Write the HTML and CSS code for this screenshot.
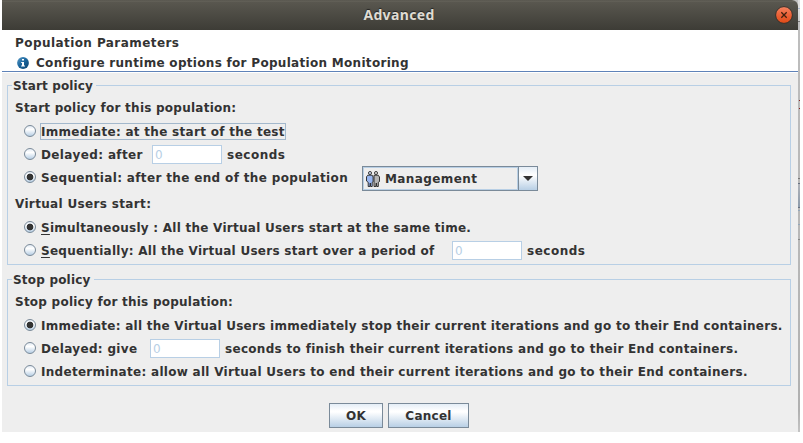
FILE: index.html
```html
<!DOCTYPE html>
<html lang="en">
<head>
<meta charset="utf-8">
<title>Advanced</title>
<link rel="stylesheet" href="styles.css">
</head>
<body>
<div class="desktop">
  <main class="dialog">
    <header class="titlebar">
      <span class="title">Advanced</span>
      <button class="close" aria-label="Close"><svg width="18" height="18" viewBox="0 0 18 18"><defs><linearGradient id="cg" x2="0" y2="1"><stop stop-color="#f58462"/><stop offset=".5" stop-color="#ec6237"/><stop offset="1" stop-color="#df4a16"/></linearGradient></defs><circle cx="9" cy="9" r="8.4" fill="url(#cg)" stroke="#33312c" stroke-width="1"/><path d="M6.3 6.3l5.4 5.4M11.7 6.3l-5.4 5.4" stroke="#40200f" stroke-width="1.3"/></svg></button>
    </header>
    <section class="banner">
      <div class="heading"><span class="t1">Population Parameters</span></div>
      <div class="info">
        <svg width="12" height="12" viewBox="0 0 12 12"><defs><linearGradient id="ig" x2="1" y2="1"><stop stop-color="#5c9cc8"/><stop offset=".45" stop-color="#1d689f"/><stop offset="1" stop-color="#0b426f"/></linearGradient></defs><circle cx="6" cy="6" r="5.9" fill="url(#ig)"/><path d="M5 2h2v1.6H5zM4.2 4.9H7V8.4h1v1H4.1v-1H5V5.9h-.8z" fill="#fff"/></svg>
        <span class="t2">Configure runtime options for Population Monitoring</span>
      </div>
    </section>
    <section class="group start">
      <h2 class="legend"><span class="t3">Start policy</span></h2>
      <p class="caption"><span class="t4">Start policy for this population:</span></p>
      <div class="row"><i class="radio"></i><span class="label focus"><span class="t5">Immediate: at the start of the test</span></span></div>
      <div class="row"><i class="radio"></i><span class="label delayed"><span class="t6">Delayed: after</span></span><span class="field">0</span><span class="unit">seconds</span></div>
      <div class="row tall"><i class="radio on"></i><span class="label sequential"><span class="t7">Sequential: after the end of the population</span></span>
        <div class="combo"><div class="value">
          <svg width="14" height="16" viewBox="0 0 14 16"><g stroke="#222" stroke-width=".9"><circle cx="10" cy="2" r="1.5" fill="#eee"/><path d="M8 4.2h4.2l1.3 1.8v4.5l-1.2.8v4.2h-1.6l-.4-3.5-.4 3.5H8z" fill="#b5b5b5"/><circle cx="4" cy="2" r="1.5" fill="#dce8ff"/><path d="M1.8 4.2h4.4l.9 1.8v4.8l-.9.6v4.1H4.6l-.3-3.5-.4 3.5H2.2v-4.2L.5 10V5.8z" fill="#98b6f0"/></g></svg>
          <span class="t8">Management</span></div><div class="arrow"><svg width="10" height="5" viewBox="0 0 10 5"><path d="M0 0h10L5 5z" fill="#333"/></svg></div></div>
      </div>
      <p class="caption users"><span class="t9">Virtual Users start:</span></p>
      <div class="row"><i class="radio on"></i><span class="label"><span class="t10"><u>S</u>imultaneously : All the Virtual Users start at the same time.</span></span></div>
      <div class="row"><i class="radio"></i><span class="label sequentially"><span class="t11"><u>S</u>equentially: All the Virtual Users start over a period of</span></span><span class="field">0</span><span class="unit">seconds</span></div>
    </section>
    <section class="group stop">
      <h2 class="legend"><span class="t12">Stop policy</span></h2>
      <p class="caption"><span class="t13">Stop policy for this population:</span></p>
      <div class="row"><i class="radio on"></i><span class="label"><span class="t14">Immediate: all the Virtual Users immediately stop their current iterations and go to their End containers.</span></span></div>
      <div class="row"><i class="radio"></i><span class="label give"><span class="t15">Delayed: give</span></span><span class="field">0</span><span class="unit long"><span class="t16">seconds to finish their current iterations and go to their End containers.</span></span></div>
      <div class="row"><i class="radio"></i><span class="label"><span class="t17">Indeterminate: allow all Virtual Users to end their current iterations and go to their End containers.</span></span></div>
    </section>
    <footer class="actions"><button class="btn ok">OK</button><button class="btn cancel">Cancel</button></footer>
  </main>
  <div class="behind"><i></i><i></i></div>
</div>
</body>
</html>
```
FILE: styles.css
```css
* { box-sizing: border-box; }
body { margin: 0; background: #fff; color: #333; font: bold 12px/16px "DejaVu Sans", sans-serif; white-space: nowrap; overflow: hidden; }
h2, p { margin: 0; font: inherit; }
.desktop { display: flex; width: 800px; height: 432px; padding-left: 2px; background: linear-gradient(90deg, #fff 2px, #c0c0c0 2px); }
.dialog { width: 796px; height: 432px; background: #eee; border-top-right-radius: 6px; overflow: hidden; }
.titlebar { display: grid; grid-template-columns: 1fr 26px; align-items: center; height: 30px; background: linear-gradient(#4f4d46 0, #68665d 1px, #59574f 2px, #3d3c36 30px); }
.title { padding-left: 24px; text-align: center; color: #dfdbd2; font: bold 14px/18px "Noto Sans", sans-serif; letter-spacing: .35px; text-shadow: 0 -1px 1px #222; }
.close { width: 18px; height: 18px; padding: 0; border: 0; background: none; margin-left: 3px; }
.close svg { display: block; }
.banner { height: 43px; padding: 5px 0 0 13px; background: #fff; border-bottom: 1px solid #fff; box-shadow: inset 0 -1px #5f82b8; }
.heading { height: 16px; }
.info { display: flex; align-items: center; gap: 7px; height: 16px; margin-top: 4px; padding-left: 2px; }
.group { position: relative; width: 784px; margin-left: 5px; padding: 0 0 0 7px; border: 1px solid #b8cfe5; }
.start { height: 180px; margin-top: 12px; }
.stop { height: 107px; margin-top: 14px; }
.legend { position: absolute; left: 4px; top: -8px; padding: 0 3px 0 1px; background: #eee; }
.caption { height: 34px; padding-top: 14px; }
.users { height: 25px; padding-top: 5px; }
.row { display: flex; height: 23px; padding: 0 0 0 9px; }
.tall { height: 25px; }
.radio { flex: none; width: 12px; height: 12px; margin: 5px 4px 0 0; border: 1px solid #7a8a99; border-radius: 50%; background: linear-gradient(#e4ecf5, #fff 35%, #b8cfe5); }
.radio.on { background: radial-gradient(circle, #333 3px, transparent 3.7px), linear-gradient(#e4ecf5, #fff 35%, #b8cfe5); }
.label { height: 17px; margin-top: 3px; padding-left: 1px; line-height: 18px; }
.focus { width: 246px; padding-left: 0; border: 1px solid #a3b8cc; line-height: 16px; }
.delayed { width: 112px; }
.sequential { width: 322px; }
.sequentially { width: 412px; }
.give { width: 110px; }
.field { width: 70px; height: 19px; margin-top: 2px; padding-left: 2px; border: 1px solid #b8cfe5; background: #fff; color: #b8cfe5; font-weight: normal; line-height: 18px; }
.unit { margin: 3px 0 0 5px; line-height: 18px; letter-spacing: .5px; }
.combo { display: flex; width: 176px; height: 25px; border: 1px solid #7a8a99; }
.value { display: flex; align-items: center; gap: 5px; width: 156px; padding-left: 2px; border: 1px solid #b8cfe5; }
.arrow { display: flex; align-items: center; justify-content: center; width: 19px; border-left: 1px solid #7a8a99; background: linear-gradient(#e4edf6, #fff 35%, #b8cfe5); }
u { text-underline-offset: 2px; text-decoration-thickness: 1px; text-decoration-skip-ink: none; }
.actions { display: flex; gap: 5px; margin: 17px 0 0 327px; }
.btn { height: 25px; padding: 0; border: 1px solid #7a8a99; border-radius: 0; background: linear-gradient(#e4edf6, #fff 30%, #fff 35%, #b8cfe5); color: #333; font: inherit; letter-spacing: .25px; }
.ok { width: 54px; }
.cancel { width: 81px; }
.behind { width: 2px; height: 432px; background: linear-gradient(#ddd 8px, #a9b5c9 8px, #a9b5c9 9px, #ddd 9px, #ccc 21px, #777 21px, #777 22px, #bebebe 22px, #b8b8b8 178px, #777 178px, #777 179px, #b8b8b8 179px, #b8b8b8 183px, #667080 183px, #667080 184px, #b0b4ba 184px, #8d9bab 207px, #667080 207px, #667080 208px, #b8b8b8 208px, #b8b8b8 210px, #93a6b8 210px, #93a6b8 211px, #b8b8b8 211px, #b8b8b8 224px, #93a6b8 224px, #93a6b8 225px, #b8b8b8 225px, #b8b8b8 239px, #888 239px, #888 240px, #b8b8b8 240px, #b0b0b0 410px, #c4c4c4); }
.behind i { display: block; width: 1px; height: 1px; margin: 7px 0 0 1px; background: #822; }
.behind i:first-child { margin-top: 100px; }

/* Tracking that gives each string its whole-pixel advance width */
.t1 { letter-spacing: .43px; }
.t2 { letter-spacing: .3px; }
.t3 { letter-spacing: .14px; }
.t4 { letter-spacing: .24px; }
.t5 { letter-spacing: .29px; }
.t6 { letter-spacing: .38px; }
.t7 { letter-spacing: .35px; }
.t8 { letter-spacing: .4px; }
.t9 { letter-spacing: .34px; }
.t10 { letter-spacing: .255px; }
.t11 { letter-spacing: .26px; }
.t12 { letter-spacing: .2px; }
.t13 { letter-spacing: .24px; }
.t14 { letter-spacing: .262px; }
.t15 { letter-spacing: .33px; }
.t16 { letter-spacing: .307px; }
.t17 { letter-spacing: .29px; }
```
